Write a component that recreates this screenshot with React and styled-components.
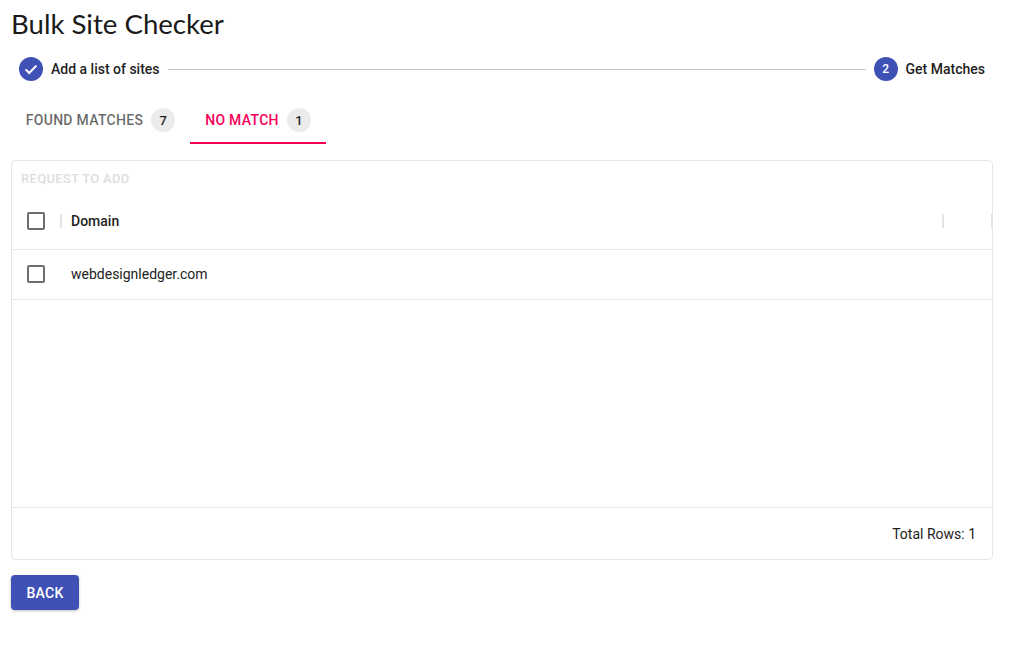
import React from 'react';
import styled, { createGlobalStyle } from 'styled-components';

const GlobalStyle = createGlobalStyle`
  html, body {
    margin: 0;
    padding: 0;
    background: #fff;
    font-family: Roboto, "Liberation Sans", sans-serif;
  }
`;

export default function App() {
  return (
    <Page>
      <GlobalStyle />
      <Title>Bulk Site Checker</Title>
      <Stepper>
        <Step>
          <StepIcon>
            <svg width="14" height="14" viewBox="0 0 14 14" fill="none">
              <path d="M1.6 7.4 5.2 11 12.4 3.6" stroke="#fff" strokeWidth="2" />
            </svg>
          </StepIcon>
          <StepLabel>Add a list of sites</StepLabel>
        </Step>
        <Connector />
        <Step>
          <StepIcon>2</StepIcon>
          <StepLabel>Get Matches</StepLabel>
        </Step>
      </Stepper>
      <Tabs>
        <Tab>
          FOUND MATCHES <Count>7</Count>
        </Tab>
        <Tab $active>
          NO MATCH <Count>1</Count>
        </Tab>
      </Tabs>
      <Table>
        <Toolbar>REQUEST TO ADD</Toolbar>
        <HeaderRow>
          <CheckCell>
            <Checkbox />
          </CheckCell>
          <Separator />
          <HeaderName>Domain</HeaderName>
          <Separator />
          <LastColumn />
          <Separator $edge />
        </HeaderRow>
        <Row>
          <CheckCell>
            <Checkbox />
          </CheckCell>
          <Cell>webdesignledger.com</Cell>
        </Row>
        <EmptySpace />
        <Footer>Total Rows: 1</Footer>
      </Table>
      <BackButton>BACK</BackButton>
    </Page>
  );
}

const Page = styled.div`
  width: 1024px;
  height: 669px;
  box-sizing: border-box;
  padding: 0 31px 0 11px;
  overflow: hidden;
  color: rgba(0, 0, 0, 0.87);
`;

const Title = styled.h1`
  margin: 0;
  height: 48px;
  font-family: Lato, "Open Sans", sans-serif;
  font-size: 27.6px;
  font-weight: 400;
  line-height: 47px;
  color: #1a1a1a;
`;

const Stepper = styled.div`
  display: flex;
  align-items: center;
  height: 42px;
  padding: 0 8px;
`;

const Step = styled.div`
  display: flex;
  align-items: center;
  gap: 8px;
`;

const StepIcon = styled.span`
  display: flex;
  align-items: center;
  justify-content: center;
  width: 24px;
  height: 24px;
  border-radius: 50%;
  background: #3f51b5;
  color: #fff;
  font-size: 12px;
  font-weight: 500;
`;

const StepLabel = styled.span`
  font-size: 14px;
  font-weight: 500;
  color: #1f1f1f;
`;

const Connector = styled.div`
  flex: 1;
  height: 1px;
  margin: 0 8px;
  background: #c6c6c6;
`;

const Tabs = styled.div`
  display: flex;
  height: 54px;
  margin-bottom: 16px;
`;

const Tab = styled.div`
  display: flex;
  align-items: center;
  justify-content: center;
  gap: 8px;
  box-sizing: border-box;
  width: ${p => (p.$active ? '136px' : '179px')};
  height: 54px;
  padding-top: 8px;
  font-size: 14px;
  font-weight: 500;
  letter-spacing: 0.3px;
  color: ${p => (p.$active ? '#f50057' : 'rgba(0, 0, 0, 0.6)')};
  border-bottom: 2px solid ${p => (p.$active ? '#f50057' : 'transparent')};
`;

const Count = styled.span`
  display: flex;
  align-items: center;
  justify-content: center;
  width: 24px;
  height: 24px;
  border-radius: 50%;
  background: #ebebeb;
  color: #1f1f1f;
  font-size: 13px;
  letter-spacing: 0;
`;

const Table = styled.div`
  display: flex;
  flex-direction: column;
  box-sizing: border-box;
  height: 400px;
  border: 1px solid #e6e6e6;
  border-radius: 4px;
`;

const Toolbar = styled.div`
  height: 37px;
  padding: 10px 0 0 9px;
  box-sizing: border-box;
  font-size: 13px;
  font-weight: 500;
  letter-spacing: 0.3px;
  color: #dedede;
`;

const HeaderRow = styled.div`
  display: flex;
  align-items: center;
  box-sizing: border-box;
  height: 52px;
  padding-bottom: 5px;
  border-bottom: 1px solid #e6e6e6;
`;

const Row = styled.div`
  display: flex;
  align-items: center;
  box-sizing: border-box;
  height: 50px;
  padding-bottom: 1px;
  border-bottom: 1px solid #e6e6e6;
`;

const CheckCell = styled.div`
  display: flex;
  align-items: center;
  justify-content: center;
  width: 48px;
  flex-shrink: 0;
`;

const Checkbox = styled.span`
  width: 14px;
  height: 14px;
  border: 2px solid #6e6e6e;
  border-radius: 2px;
`;

const Separator = styled.span`
  width: 2px;
  height: 14px;
  margin-right: ${p => (p.$edge ? '-1px' : '0')};
  background: #e4e4e4;
`;

const HeaderName = styled.div`
  flex: 1;
  padding-left: 9px;
  font-size: 14px;
  font-weight: 500;
  color: #1f1f1f;
`;

const LastColumn = styled.div`
  width: 47px;
`;

const Cell = styled.div`
  padding-left: 11px;
  font-size: 14px;
  color: #222;
`;

const EmptySpace = styled.div`
  flex: 1;
  border-bottom: 1px solid #e6e6e6;
`;

const Footer = styled.div`
  display: flex;
  align-items: center;
  justify-content: flex-end;
  height: 51px;
  padding-right: 16px;
  font-size: 14px;
  color: #222;
`;

const BackButton = styled.button`
  display: block;
  width: 68px;
  height: 35px;
  margin-top: 15px;
  padding: 0;
  border: 0;
  border-radius: 4px;
  background: #3f51b5;
  color: #fff;
  font-family: Roboto, sans-serif;
  font-size: 14px;
  font-weight: 500;
  letter-spacing: 0.3px;
  box-shadow: 0 1px 3px rgba(0, 0, 0, 0.25);
`;
